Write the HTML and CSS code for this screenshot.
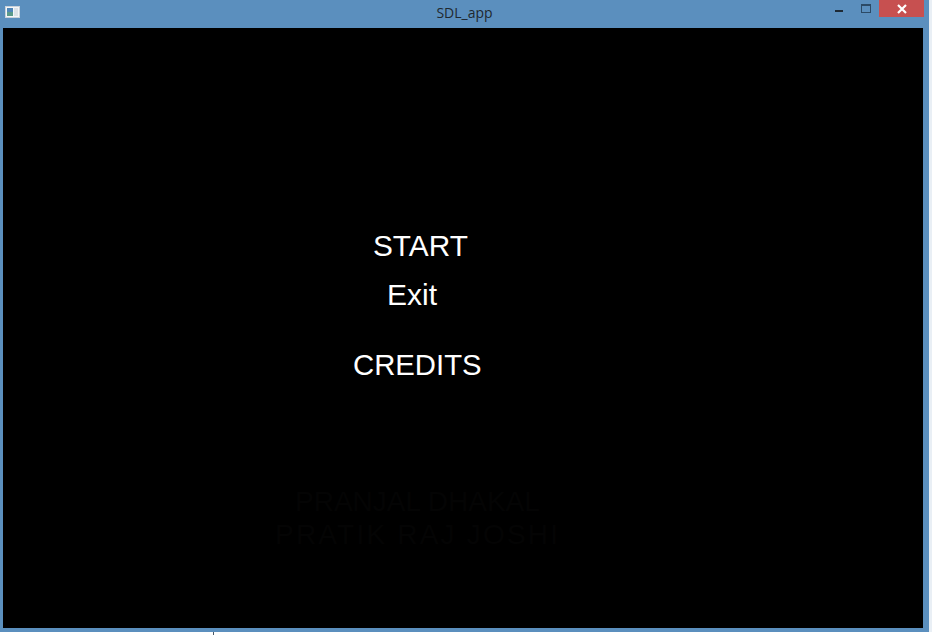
FILE: index.html
```html
<!DOCTYPE html>
<html>
<head>
<meta charset="utf-8">
<title>SDL_app</title>
<link rel="stylesheet" href="styles.css">
</head>
<body>
<div class="screen">
  <div class="window">
    <div class="titlebar">
      <div class="app-icon">
        <svg width="15" height="12" viewBox="0 0 15 12">
          <rect x="0.5" y="0.5" width="14" height="11" fill="#f4f6f8" stroke="#c9d2da"/>
          <rect x="2" y="2" width="6" height="8" fill="#5b9a8a"/>
          <rect x="2" y="2" width="6" height="4" fill="#4f86b8"/>
          <rect x="9" y="2" width="4" height="8" fill="#dde3e8"/>
        </svg>
      </div>
      <div class="title">SDL_app</div>
      <div class="controls">
        <div class="btn-min"><span class="dash"></span></div>
        <div class="btn-max"><span class="box"></span></div>
        <div class="btn-close">
          <svg width="12" height="10" viewBox="0 0 12 10">
            <path d="M2 1 L10 9 M10 1 L2 9" stroke="#fff" stroke-width="2.2" fill="none"/>
          </svg>
        </div>
      </div>
    </div>
    <div class="frame">
      <div class="client">
        <div class="item item-start">START</div>
        <div class="item item-exit">Exit</div>
        <div class="item item-credits">CREDITS</div>
        <div class="faint faint-1">PRANJAL DHAKAL</div>
        <div class="faint faint-2">PRATIK RAJ JOSHI</div>
      </div>
    </div>
  </div>
  <div class="edge-right"></div>
</div>
<div class="bottom-strip"><span class="tick"></span></div>
</body>
</html>
```
FILE: styles.css
```css
html, body {
  margin: 0;
  padding: 0;
  background: #ffffff;
  overflow: hidden;
}
body {
  width: 932px;
  height: 635px;
  font-family: "Liberation Sans", Arial, sans-serif;
}
.screen {
  display: flex;
  height: 632px;
}
.window {
  width: 929px;
  height: 632px;
  background: #5b8fbe;
  display: flex;
  flex-direction: column;
}
.edge-right {
  width: 3px;
  height: 632px;
  background: #e9eff5;
}
.titlebar {
  height: 28px;
  position: relative;
  display: flex;
  align-items: flex-start;
}
.app-icon {
  width: 15px;
  height: 12px;
  margin: 6px 0 0 5px;
  display: flex;
}
.title {
  position: absolute;
  left: 0;
  right: 0;
  top: 3px;
  text-align: center;
  font-family: "Open Sans", "Noto Sans", sans-serif;
  font-size: 14px;
  line-height: 20px;
  color: #20282f;
}
.controls {
  margin-left: auto;
  margin-right: 5px;
  display: flex;
  align-items: flex-start;
  height: 17px;
}
.btn-min {
  width: 26px;
  height: 17px;
  display: flex;
  justify-content: center;
}
.dash {
  width: 8px;
  height: 2px;
  margin-top: 10px;
  background: #1e2a36;
}
.btn-max {
  width: 27px;
  height: 17px;
  display: flex;
  justify-content: center;
}
.box {
  width: 8px;
  height: 6px;
  margin-top: 4px;
  border: 1px solid #2c4a66;
  border-top-width: 2px;
}
.btn-close {
  width: 45px;
  height: 17px;
  background: #c75050;
  display: flex;
  justify-content: center;
  align-items: center;
}
.frame {
  flex: 1;
  padding: 0 6px 4px 3px;
  display: flex;
}
.client {
  width: 920px;
  height: 600px;
  background: #000000;
  padding-top: 203px;
  box-sizing: border-box;
  display: flex;
  flex-direction: column;
  align-items: flex-start;
}
.item {
  color: #ffffff;
  font-size: 30px;
  line-height: 30px;
  white-space: nowrap;
}
.item-start {
  margin-left: 370px;
  font-size: 29.8px;
}
.item-exit {
  margin-left: 384px;
  margin-top: 19px;
}
.item-credits {
  margin-left: 350px;
  margin-top: 40px;
  font-size: 29.3px;
}
.faint {
  color: #040404;
  font-size: 28px;
  line-height: 28px;
  white-space: nowrap;
}
.faint-1 {
  margin-left: 292px;
  margin-top: 108px;
}
.faint-2 {
  margin-left: 272px;
  margin-top: 5px;
  letter-spacing: 2.2px;
}
.bottom-strip {
  height: 3px;
  position: relative;
  background: #ffffff;
}
.tick {
  position: absolute;
  left: 213px;
  top: 0;
  width: 1px;
  height: 3px;
  background: #4a5866;
}
```
